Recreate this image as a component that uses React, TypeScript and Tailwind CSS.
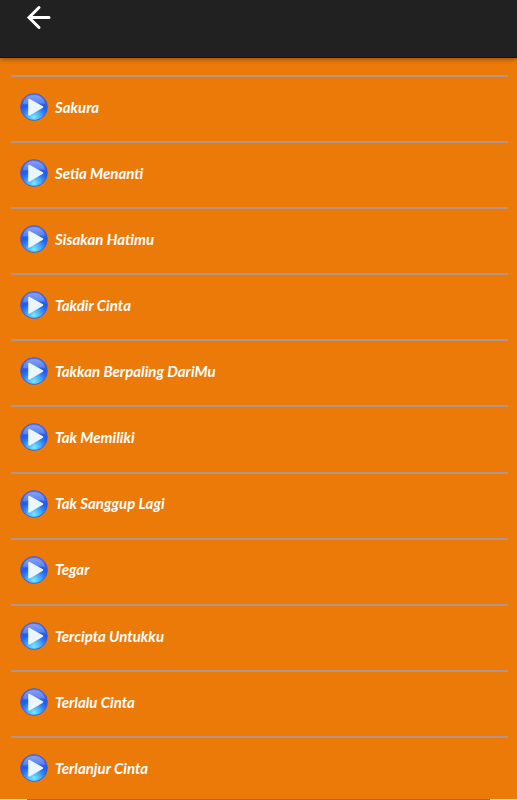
const songs = [
  'Sakura',
  'Setia Menanti',
  'Sisakan Hatimu',
  'Takdir Cinta',
  'Takkan Berpaling DariMu',
  'Tak Memiliki',
  'Tak Sanggup Lagi',
  'Tegar',
  'Tercipta Untukku',
  'Terlalu Cinta',
  'Terlanjur Cinta',
];

function PlayIcon() {
  return (
    <svg className="h-7 w-7 shrink-0" viewBox="0 0 28 28" aria-hidden="true">
      <circle cx="14" cy="14" r="13.4" fill="url(#ball)" stroke="#4a58c4" strokeWidth="0.8" />
      <circle cx="14" cy="14" r="12.8" fill="url(#glow)" />
      <path d="M3 11C4 5 8.500 2 14 2s10 3 11 9c-6-1.500-16 1-22 0z" fill="url(#shine)" />
      <path d="M9 7.500v15.500l14-8.500z" fill="#1b4fd0" opacity="0.350" />
      <path
        d="M9 6.500v15.500l13.500-8z"
        fill="#ecf7fd"
        stroke="#ecf7fd"
        strokeWidth="1.500"
        strokeLinejoin="round"
      />
    </svg>
  );
}

// Shared gradients for all play buttons
function Gradients() {
  return (
    <svg className="absolute h-0 w-0" aria-hidden="true">
      <defs>
        <linearGradient id="ball" x1="0" y1="0" x2="0" y2="1">
          <stop offset="0" stopColor="#5578ec" />
          <stop offset="0.5" stopColor="#1c5cf2" />
          <stop offset="1" stopColor="#3a86f2" />
        </linearGradient>
        <radialGradient id="glow" cx="0.5" cy="0.9" r="0.55">
          <stop offset="0" stopColor="#78ecff" />
          <stop offset="0.5" stopColor="#4cb4fb" stopOpacity="0.8" />
          <stop offset="1" stopColor="#2a7df2" stopOpacity="0" />
        </radialGradient>
        <linearGradient id="shine" x1="0" y1="0" x2="0" y2="1">
          <stop offset="0" stopColor="#ffffff" stopOpacity="0.3" />
          <stop offset="1" stopColor="#ffffff" stopOpacity="0.2" />
        </linearGradient>
      </defs>
    </svg>
  );
}

export default function App() {
  return (
    <div className="flex min-h-screen flex-col bg-[#eb7a09] font-['Lato','Liberation_Sans',sans-serif]">
      <Gradients />

      <header className="h-[58px] border-b border-[#111111] bg-[#212121] px-[26px] pt-[5px] shadow-[0_1px_5px_rgba(0,0,0,0.4)]">
        <button type="button" aria-label="Back" className="block">
          <svg
            className="h-[25px] w-[25px]"
            viewBox="0 0 25 25"
            fill="none"
            stroke="#fff"
            strokeWidth="3"
            strokeLinecap="round"
          >
            <path d="M23 12.500H3.500M13 2.500l-10 10 10 10" />
          </svg>
        </button>
      </header>

      <ul className="flex flex-1 flex-col pr-[9px] pl-[11px] pt-[17px]">
        {songs.map((song) => (
          <li
            key={song}
            className="flex-1 border-t-2 border-[#b0958f] last:h-[63px] last:flex-none"
          >
            <button type="button" className="flex w-full items-center gap-[7px] px-[9px] pt-4 text-left">
              <PlayIcon />
              <span className="text-[15px] font-bold text-white italic">{song}</span>
            </button>
          </li>
        ))}
      </ul>

      <div className="h-px bg-[#fbeee0] px-[27px]">
        <div className="h-px bg-[#8a7a10]" />
      </div>
    </div>
  );
}
